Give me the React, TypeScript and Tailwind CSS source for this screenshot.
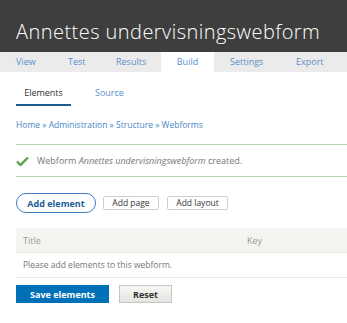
const App = () => {
  return (
    <div className="w-[347px] h-[323px] bg-white overflow-hidden" style={{ fontFamily: '"Open Sans", "Liberation Sans", sans-serif' }}>
      {/* Header */}
      <div className="h-[52px] bg-[#3e3e3e] px-4 flex items-end pb-[10px]">
        <h1 className="text-white text-[20px] leading-none font-light tracking-[0.45px] whitespace-nowrap">Annettes undervisningswebform</h1>
      </div>
      {/* Primary tabs */}
      <div className="h-[20px] bg-[#ebebeb] flex text-[9px] text-[#5b8fcc] leading-[20px]">
        <div className="w-[68px] pl-4">View</div>
        <div className="w-[48px]">Test</div>
        <div className="w-[45px]">Results</div>
        <div className="w-[53px] bg-white text-center">Build</div>
        <div className="w-[82px] pl-4">Settings</div>
        <div>Export</div>
      </div>
      {/* Secondary tabs */}
      <div className="flex px-4 mt-[14px] text-[9px]">
        <div className="w-[55px] text-center text-[#333] pb-[4px] border-b-2 border-[#1f5a8a]">Elements</div>
        <div className="ml-[24px] text-[#5b8fcc]">Source</div>
      </div>
      {/* Breadcrumb */}
      <div className="px-4 mt-[13px] text-[8.5px] text-[#4a86c5]">Home » Administration » Structure » Webforms</div>
      {/* Message */}
      <div className="ml-4 mt-[13px] h-[33px] border-y border-[#b9d6a8] flex items-center gap-[8px] text-[9px] text-[#777]">
        <svg width="13" height="10" viewBox="0 0 13 10">
          <path d="M1 5.5 L4.5 9 L12 1.5" stroke="#5aa14a" strokeWidth="2.4" fill="none" />
        </svg>
        <span>Webform <em>Annettes undervisningswebform</em> created.</span>
      </div>
      {/* Action buttons */}
      <div className="px-4 mt-[16px] flex items-center">
        <div className="w-[80px] h-[20px] rounded-full border-[1.5px] border-[#3d7bbf] text-[#1c5c96] font-bold text-[9px] flex items-center justify-center">Add element</div>
        <div className="ml-[7px] w-[56px] h-[14px] border border-[#cfcfcf] rounded-[2px] text-[8.5px] text-[#333] flex items-center justify-center">Add page</div>
        <div className="ml-[8px] w-[61px] h-[14px] border border-[#cfcfcf] rounded-[2px] text-[8.5px] text-[#333] flex items-center justify-center">Add layout</div>
      </div>
      {/* Table */}
      <div className="ml-4 mt-[15px]">
        <div className="h-[25px] bg-[#f4f4f1] border-b border-[#e6e6e3] flex items-center text-[9px] text-[#999]">
          <div className="w-[231px] pl-[7px]">Title</div>
          <div>Key</div>
        </div>
        <div className="h-[25px] border-b border-[#e8e8e8] flex items-center pl-[7px] text-[8.5px] text-[#777]">Please add elements to this webform.</div>
      </div>
      {/* Form actions */}
      <div className="px-4 mt-[7px] flex items-center">
        <div className="w-[93px] h-[18px] bg-[#0071b8] text-white font-bold text-[9px] flex items-center justify-center">Save elements</div>
        <div className="ml-[10px] w-[53px] h-[18px] border border-[#c4c4c4] bg-gradient-to-b from-[#f6f6f3] to-[#e4e4e1] text-[#333] font-bold text-[9px] flex items-center justify-center">Reset</div>
      </div>
    </div>
  );
};

export default App;
